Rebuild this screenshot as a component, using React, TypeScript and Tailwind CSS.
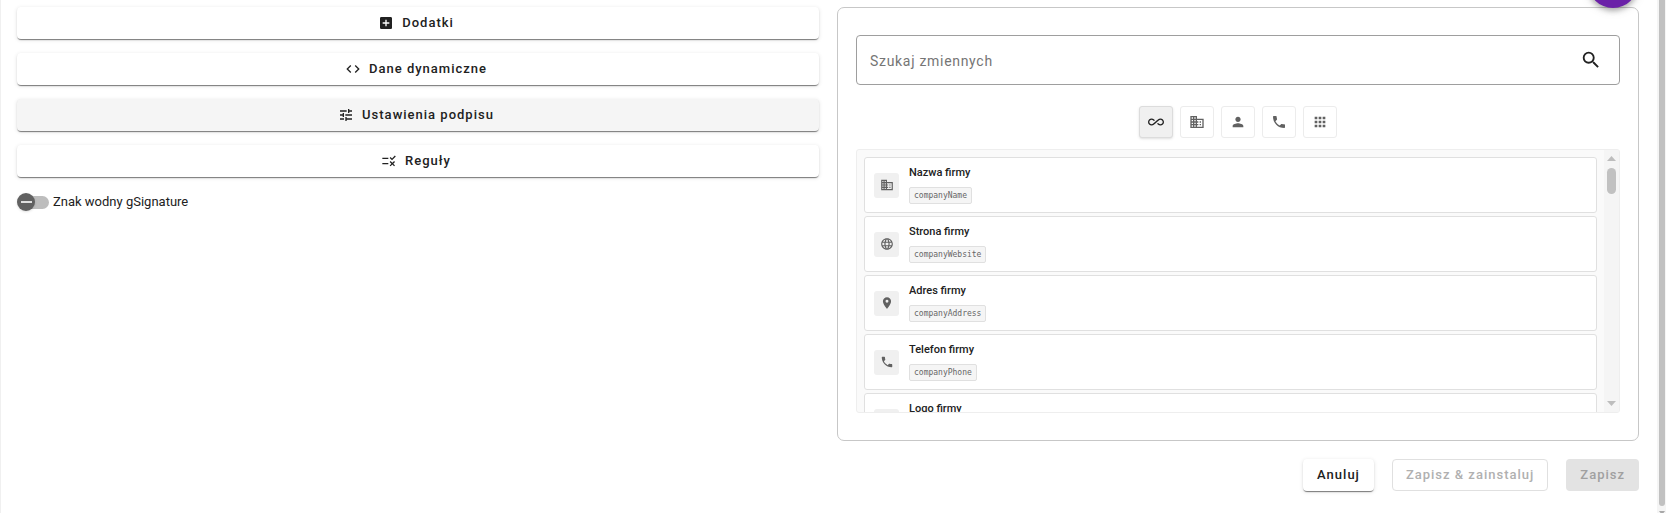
import React, { useState } from 'react'
import type { IconType } from 'react-icons'
import {
  MdAddBox,
  MdAllInclusive,
  MdApps,
  MdBusiness,
  MdCode,
  MdImage,
  MdLanguage,
  MdPerson,
  MdPhone,
  MdPlace,
  MdRule,
  MdSearch,
  MdTune,
} from 'react-icons/md'

type Variable = { key: string; label: string; icon: IconType }

const sections = [
  { label: 'Dodatki', icon: MdAddBox },
  { label: 'Dane dynamiczne', icon: MdCode },
  { label: 'Ustawienia podpisu', icon: MdTune },
  { label: 'Reguły', icon: MdRule },
]

const categories = [
  { id: 'all', title: 'Wszystkie', icon: MdAllInclusive },
  { id: 'company', title: 'Firma', icon: MdBusiness },
  { id: 'person', title: 'Osoba', icon: MdPerson },
  { id: 'phone', title: 'Telefon', icon: MdPhone },
  { id: 'other', title: 'Inne', icon: MdApps },
]

const variables: Variable[] = [
  { key: 'companyName', label: 'Nazwa firmy', icon: MdBusiness },
  { key: 'companyWebsite', label: 'Strona firmy', icon: MdLanguage },
  { key: 'companyAddress', label: 'Adres firmy', icon: MdPlace },
  { key: 'companyPhone', label: 'Telefon firmy', icon: MdPhone },
  { key: 'companyLogo', label: 'Logo firmy', icon: MdImage },
]

function SectionButton({ label, icon: Icon, active }: { label: string; icon: IconType; active: boolean }) {
  return (
    <button
      type="button"
      className={`flex h-8 w-full items-center justify-center gap-2 rounded pr-1 text-[13px] font-medium tracking-[1px] text-[#212121] shadow-[0_2px_1px_-1px_rgba(0,0,0,0.35),0_1px_1px_rgba(0,0,0,0.2),0_1px_4px_rgba(0,0,0,0.12)] ${active ? 'bg-[#f5f5f5]' : 'bg-white'}`}
    >
      <Icon className="size-4" />
      <span className="pb-px">{label}</span>
    </button>
  )
}

function VariableRow({ variable }: { variable: Variable }) {
  const Icon = variable.icon
  return (
    <li className="flex h-14 shrink-0 items-center gap-2.5 rounded-[3px] border border-[#e0e0e0] bg-white px-[9px]">
      <span className="flex size-[25px] shrink-0 items-center justify-center rounded-[3px] bg-[#f0f0f0] text-[#616161]">
        <Icon className="size-[14px]" />
      </span>
      <div className="flex flex-col items-start gap-[7px]">
        <span className="text-[11px] leading-[14px] font-medium text-[#212121]">{variable.label}</span>
        <code className="rounded-[2px] border border-[#e0e0e0] bg-[#f5f5f5] px-1 font-['DejaVu_Sans_Mono',monospace] text-[8px] leading-[15px] text-[#666666]">
          {variable.key}
        </code>
      </div>
    </li>
  )
}

export default function App() {
  const [category, setCategory] = useState('all')
  const [query, setQuery] = useState('')
  const [watermark, setWatermark] = useState(false)

  const visible = variables.filter(v => v.label.toLowerCase().includes(query.toLowerCase()))

  return (
    <div className="relative flex h-screen overflow-hidden border-l border-[#f0f0f0] bg-white font-[Roboto,sans-serif] text-[#212121]">
      <main className="grid flex-1 grid-cols-2 items-start gap-x-[18px] pt-[7px] pr-[18px] pl-4">
        <div className="flex flex-col gap-[14px]">
          {sections.map(s => (
            <SectionButton key={s.label} label={s.label} icon={s.icon} active={s.label === 'Ustawienia podpisu'} />
          ))}
          <label className="flex items-center gap-1 text-[13px] leading-[22px]">
            <span className="relative flex h-5 w-8 items-center">
              <input
                type="checkbox"
                role="switch"
                checked={watermark}
                onChange={e => setWatermark(e.target.checked)}
                className="ml-1 h-[13px] w-7 appearance-none rounded-full bg-[#bdbdbd]"
              />
              <span
                className={`pointer-events-none absolute flex size-[18px] items-center justify-center rounded-full bg-[#616161] shadow-sm ${watermark ? 'right-0' : 'left-0'}`}
              >
                <span className="h-[2px] w-[11px] bg-[#e0e0e0]" />
              </span>
            </span>
            Znak wodny gSignature
          </label>
        </div>

        <div>
          <section className="rounded-[7px] border border-[#c7c7c7] px-[18px] py-[27px]">
            <label className="flex h-[50px] items-center rounded border border-[#9e9e9e] pr-[17px] pl-[13px]">
              <input
                type="text"
                aria-label="Szukaj zmiennych"
                placeholder="Szukaj zmiennych"
                value={query}
                onChange={e => setQuery(e.target.value)}
                className="min-w-0 flex-1 bg-transparent pt-0.5 text-[14px] tracking-wider outline-none placeholder:text-[#757575]"
              />
              <MdSearch className="size-[22px]" />
            </label>

            <div className="mt-[21px] flex justify-center gap-[7px]">
              {categories.map(({ id, title, icon: Icon }) => (
                <button
                  key={id}
                  type="button"
                  aria-label={title}
                  onClick={() => setCategory(id)}
                  className={`flex h-8 w-[34px] items-center justify-center rounded-[3px] border ${category === id ? 'border-[#dcdcdc] bg-[#f0f0f0] text-[#212121] shadow' : 'border-[#ececec] bg-white text-[#616161]'}`}
                >
                  <Icon className="size-4" />
                </button>
              ))}
            </div>

            <div className="mt-[11px] flex h-[264px] overflow-hidden rounded-[3px] border border-[#eeeeee] bg-[#fafafa]">
              <ul className="flex flex-1 flex-col gap-[3px] overflow-hidden p-[7px]">
                {visible.map(v => (
                  <VariableRow key={v.key} variable={v} />
                ))}
              </ul>
              <div className="flex w-[15px] flex-col items-center justify-between bg-[#f5f5f5] py-[6px]">
                <div className="flex flex-col items-center gap-[7px]">
                  <svg viewBox="0 0 9 5" className="h-[5px] w-[9px] fill-[#bdbdbd]">
                    <path d="M0 5 4.500 0 9 5z" />
                  </svg>
                  <div className="h-[26px] w-[9px] rounded-full bg-[#c1c1c1]" />
                </div>
                <svg viewBox="0 0 9 5" className="h-[5px] w-[9px] fill-[#bdbdbd]">
                  <path d="M0 0 4.500 5 9 0z" />
                </svg>
              </div>
            </div>
          </section>

          <div className="mt-[18px] flex justify-end gap-[18px] text-[13px] font-medium tracking-[1px]">
            <button
              type="button"
              className="h-8 rounded bg-white px-[14px] shadow-[0_2px_1px_-1px_rgba(0,0,0,0.35),0_1px_1px_rgba(0,0,0,0.2),0_1px_4px_rgba(0,0,0,0.12)]"
            >
              Anuluj
            </button>
            <button type="button" disabled className="h-8 rounded border border-[#e0e0e0] px-[13px] text-[#b0b0b0]">
              Zapisz &amp; zainstaluj
            </button>
            <button type="button" disabled className="h-8 rounded bg-[#e3e3e3] px-[14px] text-[#a0a0a0]">
              Zapisz
            </button>
          </div>
        </div>
      </main>

      {/* page scrollbar */}
      <div className="flex w-[9px] flex-col items-center bg-[#f5f5f5]">
        <div className="w-[6px] flex-1 rounded-b-full bg-[#c1c1c1]" />
        <svg viewBox="0 0 6 7" className="h-[7px] w-[6px] fill-[#a8a8a8]">
          <path d="M0 5h6L4.500 7h-3z" />
        </svg>
      </div>

      <button
        type="button"
        aria-label="Pomoc"
        className="absolute -top-[42px] right-[28px] size-[50px] rounded-full bg-[#6b21a8] shadow-[0_3px_5px_rgba(0,0,0,0.25),0_1px_12px_rgba(0,0,0,0.15)]"
      />
    </div>
  )
}
